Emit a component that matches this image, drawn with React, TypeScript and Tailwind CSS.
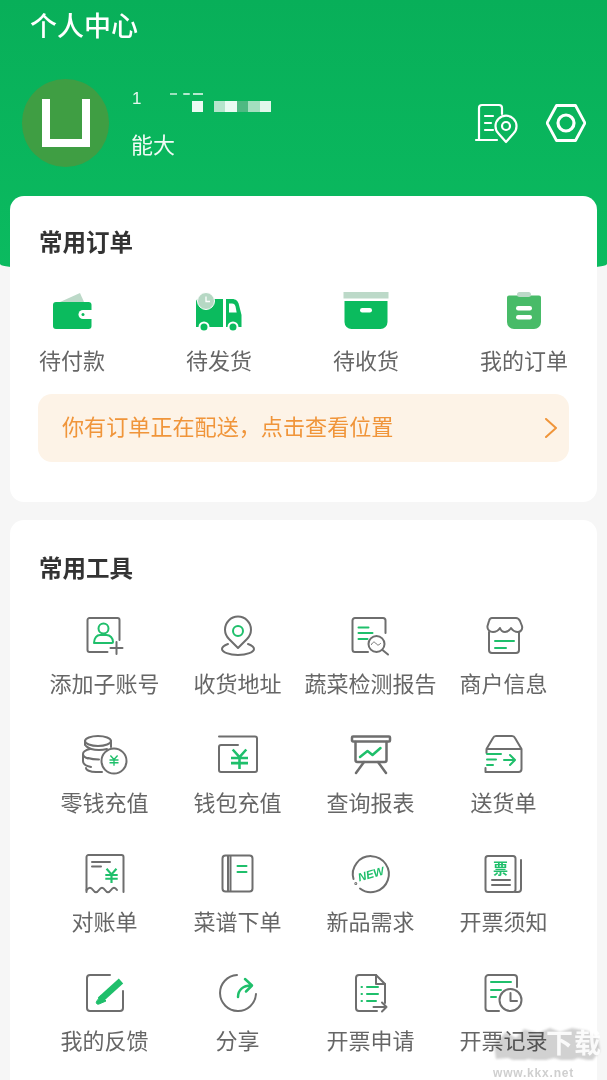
import React from 'react';

const GRAY = '#6e6e6e';
const GREEN = '#1fbf6b';

const Ic: React.FC<{ children: React.ReactNode }> = ({ children }) => (
  <svg width="40" height="40" viewBox="0 0 40 40" fill="none" stroke={GRAY} strokeWidth="2" strokeLinecap="round" strokeLinejoin="round" className="overflow-visible">
    {children}
  </svg>
);

const Yen: React.FC<{ x: number; y: number; s?: number; w?: number }> = ({ x, y, s = 1, w = 3 }) => (
  <g transform={`translate(${x} ${y}) scale(${s})`} stroke={GREEN} strokeWidth={w} strokeLinecap="butt">
    <path d="M-8-10 0-1 8-10M-10 0H10M-10 6H10M0-1V13" />
  </g>
);

const tools: { label: string; icon: React.ReactNode }[] = [
  {
    label: '添加子账号',
    icon: (
      <Ic>
        <path d="M34.5 24V4a2 2 0 0 0-2-2h-28a2 2 0 0 0-2 2v30a2 2 0 0 0 2 2h18" />
        <path d="M31.5 26v12M25.5 32h12" />
        <g stroke={GREEN}>
          <circle cx="18.5" cy="12.5" r="5" />
          <path d="M9 27c0-5 3-8 6-8h6.500c3.500 0 6.500 3 6.500 7 0 .7-.4 1-1 1z" />
        </g>
      </Ic>
    ),
  },
  {
    label: '收货地址',
    icon: (
      <Ic>
        <path d="M20 32 11 23a13 13 0 1 1 18 0z" />
        <circle cx="20" cy="15" r="5" stroke={GREEN} />
        <path d="M10 28c-4 1.500-6 3-6 5 0 3 7 6 16 6s16-3 16-6c0-2-2-3.500-6-5" />
      </Ic>
    ),
  },
  {
    label: '蔬菜检测报告',
    icon: (
      <Ic>
        <path d="M34.500 17V4.500a2.500 2.500 0 0 0-2.500-2.500H4a2.500 2.500 0 0 0-2.500 2.500V33.500A2.500 2.500 0 0 0 4 36h13" />
        <circle cx="25.500" cy="28" r="8" />
        <path d="m31.500 34 5.500 4.500" />
        <path d="M20.500 28.500c1.500-3 3-3 4.500-1s2.500 2 4.500 0" strokeWidth="1" />
        <path d="M7.500 11.500h10M7.500 17h14M7.500 23h9" stroke={GREEN} />
      </Ic>
    ),
  },
  {
    label: '商户信息',
    icon: (
      <Ic>
        <path d="M8 2h24c2 0 3 1 4 3l2 5c1 4-2 6-4 6-3 0-5-1-7-4-2 3-3 4-6 4-2.500 0-4-1-5-4-2 3-4 4-7 4-3 0-6-2-5.500-6L5 5c.5-2 1.500-3 3-3z" />
        <path d="M5 16v18a3 3 0 0 0 3 3h24a3 3 0 0 0 3-3V16" />
        <path d="M11 25h19M11 32h11" stroke={GREEN} />
      </Ic>
    ),
  },
  {
    label: '零钱充值',
    icon: (
      <Ic>
        <ellipse cx="13" cy="6" rx="13" ry="5" />
        <path d="M26 6v6M0 6v4M5 14c-4 1-7 2.500-7 5 0 2 2 3.500 5 4.500M-2 19v7c0 3 3 5 8 6M1 33c0 2 4 4 10 4h6" />
        <path d="M1 11c3 3 8 4 13 4 3 0 6-.5 8-1" />
        <path d="M3 23c3 1 6 1.500 11 1.500" />
        <circle cx="29" cy="26" r="12.500" />
        <Yen x={29} y={25} s={0.45} w={3} />
      </Ic>
    ),
  },
  {
    label: '钱包充值',
    icon: (
      <Ic>
        <path d="M1 1.500h36a2 2 0 0 1 2 2V35a2 2 0 0 1-2 2H3a2 2 0 0 1-2-2V12a2 2 0 0 1 2-2h17" />
        <Yen x={21.500} y={23} s={0.85} w={3} />
      </Ic>
    ),
  },
  {
    label: '查询报表',
    icon: (
      <Ic>
        <rect x="1" y="1.500" width="38" height="5" rx="1" strokeWidth="2.500" />
        <path d="M4.500 7v18a2 2 0 0 0 2 2h27a2 2 0 0 0 2-2V7" strokeWidth="2.500" />
        <path d="M13 27 5 38M27 27l8 11" strokeWidth="2.500" />
        <path d="m9 22 7.500-6 5 4 8-7" stroke={GREEN} strokeWidth="2.500" />
      </Ic>
    ),
  },
  {
    label: '送货单',
    icon: (
      <Ic>
        <path d="M2.500 18v-4L9 3c.6-1.300 1.500-2 3-2h16c1.500 0 2.400.7 3 2l6.500 11v20a3 3 0 0 1-3 3h-33v-4" />
        <path d="M3 14h34" />
        <path d="M3 19h14M3 24.500h9M3 30h6M20 25h10M26 20l5 5-5 5" stroke={GREEN} />
      </Ic>
    ),
  },
  {
    label: '对账单',
    icon: (
      <Ic>
        <path d="M1.500 38V3a2 2 0 0 1 2-2h33a2 2 0 0 1 2 2v35" />
        <path d="M1.500 36c2.500-3 4.500-3 6.500 0s4 3 6 0 4-3 6 0 4 3 6 0 4-3 6 0" />
        <path d="M7 8h18M7 12.500h9" />
        <Yen x={26.500} y={21} s={0.62} w={3.500} />
      </Ic>
    ),
  },
  {
    label: '菜谱下单',
    icon: (
      <Ic>
        <rect x="4.500" y="1.500" width="30" height="36" rx="3" />
        <path d="M10 2v35M12.500 2v35" />
        <path d="M19.500 12h9M19.500 18h9" stroke={GREEN} />
      </Ic>
    ),
  },
  {
    label: '新品需求',
    icon: (
      <Ic>
        <path d="M2.500 25A18 18 0 1 1 9 34.500" />
        <circle cx="4.800" cy="29.500" r="0.500" />
        <text x="20" y="24" textAnchor="middle" fontSize="11.500" fontWeight="800" fontStyle="italic" fill={GREEN} stroke="none" transform="rotate(-16 20 20)" fontFamily="'Liberation Sans',sans-serif">NEW</text>
      </Ic>
    ),
  },
  {
    label: '开票须知',
    icon: (
      <Ic>
        <rect x="1.500" y="2" width="30" height="36" rx="2.500" />
        <path d="M37 6v29a3 3 0 0 1-3 3h-3" />
        <path d="M8 26h18M8 31h18" />
        <text x="16.500" y="20" textAnchor="middle" fontSize="15" fontWeight="700" fill={GREEN} stroke="none" fontFamily="'Noto Sans CJK SC',sans-serif">票</text>
      </Ic>
    ),
  },
  {
    label: '我的反馈',
    icon: (
      <Ic>
        <path d="M25 2H5a3 3 0 0 0-3 3v30a3 3 0 0 0 3 3h30a3 3 0 0 0 3-3V18" />
        <path d="m36 8-21 19" stroke={GREEN} strokeWidth="6.500" strokeLinecap="butt" />
        <path d="m16 23 5 5-7 3c-2 .8-3.500-1-2.500-2.500z" fill={GREEN} stroke={GREEN} strokeWidth="1" />
      </Ic>
    ),
  },
  {
    label: '分享',
    icon: (
      <Ic>
        <path d="M38 21A18 18 0 1 1 19 2" />
        <path d="M20 24c0-7 5-11.500 13-11.500M27 6l7 6.500-6 6" stroke={GREEN} strokeWidth="2.500" />
      </Ic>
    ),
  },
  {
    label: '开票申请',
    icon: (
      <Ic>
        <path d="M26 38H8a3 3 0 0 1-3-3V5a3 3 0 0 1 3-3h17l9 9v19" />
        <path d="M25 2v9h9" />
        <path d="M22.500 34h13M31 29.500l4.500 4.500-4.500 4.500" />
        <path d="M10.500 14h.5M10.500 21h.5M10.500 28h.5M16 14h11M16 21h11M16 28h9" stroke={GREEN} />
      </Ic>
    ),
  },
  {
    label: '开票记录',
    icon: (
      <Ic>
        <path d="M33 14V5a3 3 0 0 0-3-3H4.500a3 3 0 0 0-3 3v30a3 3 0 0 0 3 3H15" />
        <circle cx="26.500" cy="27" r="11" />
        <path d="M26.500 20v8h6.500" />
        <path d="M7 9h20M7 17h10M7 24h5" stroke={GREEN} />
      </Ic>
    ),
  },
];

const orders: { label: string; icon: React.ReactNode }[] = [
  {
    label: '待付款',
    icon: (
      <svg width="40" height="40" viewBox="0 0 40 40">
        <path d="M8 10 28 1l4 9z" fill="#bcd9c8" />
        <rect x="1" y="10" width="38.500" height="27" rx="3" fill="#0bbb5e" />
        <path d="M40 18H31a4.500 4.500 0 0 0 0 9h9z" fill="#fff" />
        <circle cx="31" cy="22.500" r="1.500" fill="#0bbb5e" />
      </svg>
    ),
  },
  {
    label: '待发货',
    icon: (
      <svg width="46" height="40" viewBox="0 0 46 40">
        <path d="M0 10c0-2 1-3 3-3h24v28H0z" fill="#0bbb5e" />
        <circle cx="10" cy="9" r="8.500" fill="#b6d8c4" stroke="#fff" strokeWidth="1" />
        <path d="M10 4.500V9.500h4" fill="none" stroke="#fff" strokeWidth="1.300" />
        <path d="M30 7h6c4 0 6 2 7 6l2.500 10v12H30z" fill="#0bbb5e" />
        <path d="M33 11.500h3c2 0 3 1 3.500 3l1.200 6H33z" fill="#fff" />
        <circle cx="8" cy="35" r="4.500" fill="#0bbb5e" stroke="#fff" strokeWidth="2" />
        <circle cx="37" cy="35" r="4.500" fill="#0bbb5e" stroke="#fff" strokeWidth="2" />
      </svg>
    ),
  },
  {
    label: '待收货',
    icon: (
      <svg width="46" height="40" viewBox="0 0 46 40">
        <rect x="0.500" y="0" width="45" height="6.500" fill="#bcd9c8" />
        <path d="M1.500 9h43v21a7 7 0 0 1-7 7h-29a7 7 0 0 1-7-7z" fill="#0bbb5e" />
        <rect x="17" y="16" width="12" height="4.500" rx="2.200" fill="#fff" />
      </svg>
    ),
  },
  {
    label: '我的订单',
    icon: (
      <svg width="36" height="40" viewBox="0 0 36 40">
        <path d="M3 3.500h30a2 2 0 0 1 2 2V30a7 7 0 0 1-7 7H8a7 7 0 0 1-7-7V5.500a2 2 0 0 1 2-2z" fill="#48bb68" />
        <rect x="11" y="0" width="14" height="5" rx="2.500" fill="#bcd9c8" />
        <rect x="10" y="14" width="16" height="4.500" rx="2.200" fill="#fff" />
        <rect x="10" y="23" width="16" height="4.500" rx="2.200" fill="#fff" />
      </svg>
    ),
  },
];

export default function App() {
  return (
    <div className="relative h-[1080px] w-[607px] overflow-hidden bg-[#f6f6f6] font-['Noto_Sans_CJK_SC','Noto_Sans',sans-serif]">
      <header className="h-[276px] rounded-b-[50%_12px] bg-linear-to-b from-[#08af59] to-[#0bbb60] pt-[5px]">
        <h1 className="pl-[30px] text-[27px] leading-[40px] font-medium text-white">个人中心</h1>
        <div className="mt-[34px] flex items-center justify-between pr-[21px] pl-[22px]">
          <div className="flex items-center gap-[22px]">
            {/* avatar: a plain white bracket on olive green */}
            <div className="flex h-[88px] w-[87px] items-center justify-center rounded-full bg-[#3f9e43]">
              <div className="h-[48px] w-[48px] border-x-[8px] border-b-[8px] border-white" />
            </div>
            <div className="flex flex-col text-white">
              <div className="relative h-[24px] w-[150px]">
                <span className="absolute top-[1px] left-[1px] font-['Liberation_Sans',sans-serif] text-[17px] leading-[18px] opacity-90">1</span>
                <div className="absolute top-[4px] left-[39px] h-[2px] w-[7px] bg-white/60" />
                <div className="absolute top-[4px] left-[52px] h-[2px] w-[7px] rounded-full bg-white/70" />
                <div className="absolute top-[4px] left-[62px] h-[2px] w-[10px] bg-white/70" />
                <div className="absolute top-[12px] left-[61px] h-[11px] w-[11px] bg-[#eafaf2]" />
                <div className="absolute top-[12px] left-[83px] flex h-[11px]">
                  <div className="w-[11px] bg-[#b5e5cc]" />
                  <div className="w-[12px] bg-[#eafaf2]" />
                  <div className="w-[11px] bg-[#4eb982]" />
                  <div className="w-[12px] bg-[#a4dfbf]" />
                  <div className="w-[11px] bg-[#e2f7ec]" />
                </div>
              </div>
              <div className="mt-[15px] text-[22px] leading-[30px] opacity-95">能大</div>
            </div>
          </div>
          <div className="flex items-center gap-[29px]">
            <svg width="42" height="40" viewBox="0 0 42 40" fill="none" stroke="#fff" strokeWidth="2.200" strokeLinecap="round" strokeLinejoin="round" className="overflow-visible">
              <path d="M1 37h21M4 37V5a3 3 0 0 1 3-3h17a3 3 0 0 1 3 3v6" />
              <path d="M10 13h8M10 20h6M10 27h8" />
              <path d="m31 39-7.500-8.500a10.500 10.500 0 1 1 15 0z" />
              <circle cx="31" cy="23" r="4" />
            </svg>
            <svg width="40" height="40" viewBox="0 0 40 40" fill="none" stroke="#fff" strokeWidth="2.800" strokeLinejoin="round">
              <path d="M10.500 2.500h19L39 20l-9.500 17.500h-19L1 20z" />
              <circle cx="20" cy="20" r="8" strokeWidth="3.200" />
            </svg>
          </div>
        </div>
      </header>

      <main className="relative -mt-[80px] flex flex-col gap-[18px] px-[10px]">
        <section className="rounded-[14px] bg-white px-[29px] pt-[28px] pb-[40px]">
          <h2 className="text-[23.5px] leading-[34px] font-bold text-[#333]">常用订单</h2>
          <div className="mt-[34px] flex justify-between">
            {orders.map((o) => (
              <div key={o.label} className="flex flex-col items-center">
                <div className="flex h-[40px] items-start justify-center">{o.icon}</div>
                <span className="mt-[12px] text-[22px] leading-[30px] text-[#666]">{o.label}</span>
              </div>
            ))}
          </div>
          <div className="-mx-px mt-[20px] flex h-[68px] items-center justify-between rounded-[14px] bg-[#fdf3e7] pr-[11px] pl-[24px]">
            <span className="pb-[4px] text-[22.1px] text-[#f0953a]">你有订单正在配送，点击查看位置</span>
            <svg width="14" height="20" viewBox="0 0 14 20" fill="none" stroke="#f0953a" strokeWidth="2" strokeLinecap="round" strokeLinejoin="round">
              <path d="m2 1 10 9-10 9" />
            </svg>
          </div>
        </section>

        <section className="h-[600px] rounded-[14px] bg-white pt-[30px]">
          <h2 className="pl-[29px] text-[23.5px] leading-[34px] font-bold text-[#333]">常用工具</h2>
          <div className="mt-[32px] ml-[28px] grid w-[532px] grid-cols-4 gap-y-[38px]">
            {tools.map((t) => (
              <div key={t.label} className="flex flex-col items-center">
                <div className="h-[40px]">{t.icon}</div>
                <span className="mt-[11px] text-[22px] leading-[30px] whitespace-nowrap text-[#666]">{t.label}</span>
              </div>
            ))}
          </div>
        </section>
      </main>

      {/* site watermark over the corner */}
      <div className="absolute top-[1026px] left-[492px] h-[54px] w-[115px]">
        <svg width="110" height="34" viewBox="0 0 110 34" className="absolute top-0 left-0 opacity-70 mix-blend-multiply blur-[1px]">
          <path d="M2 18 14 6l10 6 8-9 14 4 12-5 10 4 12-4 16 3 10 8 2 12-8 10-14-3-10 4-14-4-12 3-14-2-10 3-10-4-12 1z" fill="#bdbdbd" />
        </svg>
        <span className="absolute top-[-3px] left-[54px] text-[27px] leading-[38px] font-bold tracking-[1px] whitespace-nowrap text-white/90">下载</span>
        <span className="absolute top-[39px] left-[1px] font-['Liberation_Sans',sans-serif] text-[12px] leading-[16px] font-bold tracking-[0.800px] whitespace-nowrap text-[#cfcfcf]">www.kkx.net</span>
      </div>
    </div>
  );
}
